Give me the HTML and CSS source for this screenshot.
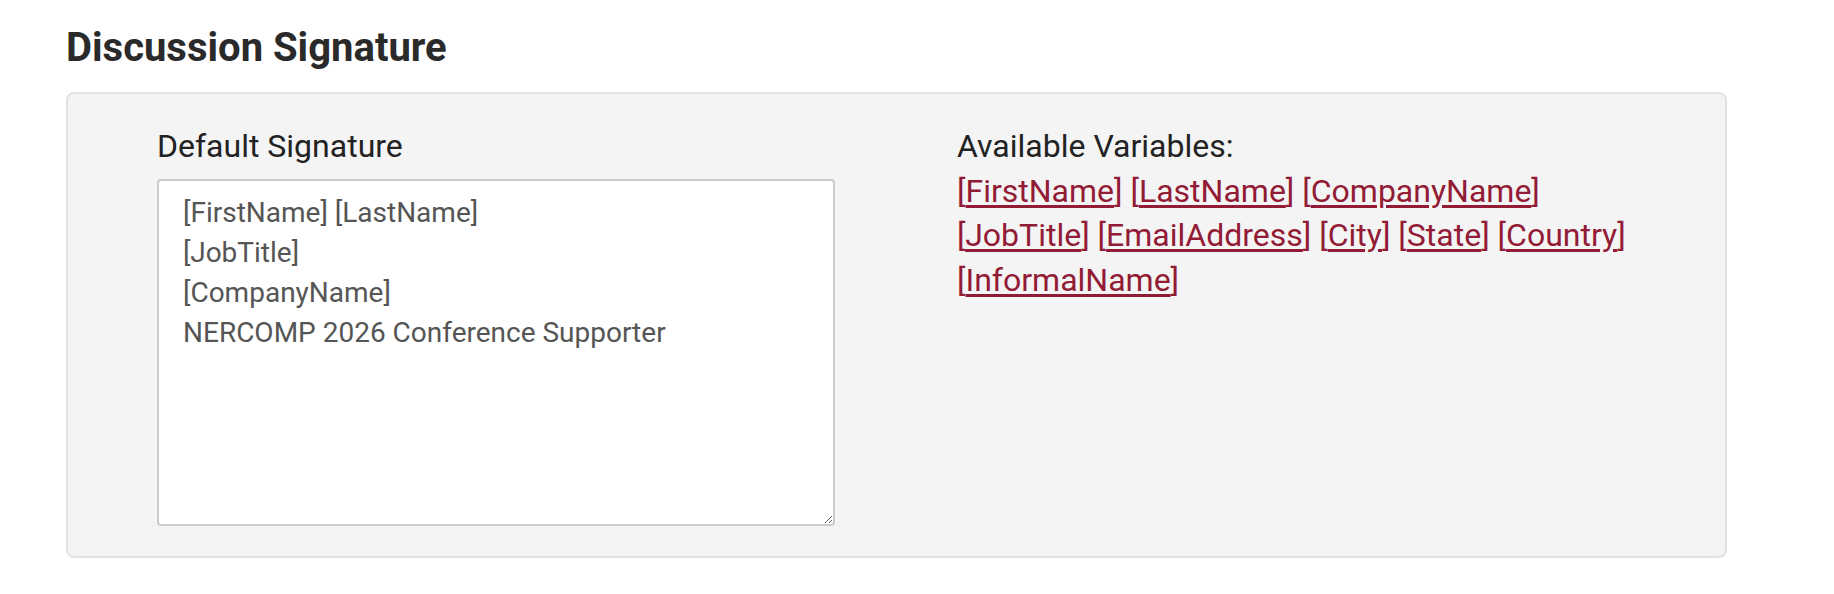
FILE: index.html
```html
<!DOCTYPE html>
<html lang="en">
<head>
    <meta charset="UTF-8">
    <meta name="viewport" content="width=device-width, initial-scale=1.0">
    <title>Discussion Signature</title>
    <link rel="stylesheet" href="styles.css">
</head>
<body>
  <div class="page">
    <h2 class="section-title">Discussion Signature</h2>

    <div class="well">
      <div class="signature-col">
        <label for="signature">Default Signature</label>
        <textarea id="signature" class="form-control">[FirstName] [LastName]
[JobTitle]
[CompanyName]
NERCOMP 2026 Conference Supporter</textarea>
      </div>

      <div class="variables-col">
        <div class="variables-title">Available Variables:</div>
        
        <div class="variables">
          <span class="var">[<a href="#">FirstName</a>]</span>
          <span class="var">[<a href="#">LastName</a>]</span>
          <span class="var">[<a href="#">CompanyName</a>]</span>
          <span class="var">[<a href="#">JobTitle</a>]</span>
          <span class="var">[<a href="#">EmailAddress</a>]</span>
          <span class="var">[<a href="#">City</a>]</span>
          <span class="var">[<a href="#">State</a>]</span>
          <span class="var">[<a href="#">Country</a>]</span>
          <span class="var">[<a href="#">InformalName</a>]</span>
        </div>
      </div>
    </div>
  </div>
</body>
</html>
```

FILE: styles.css
```css
  body {
    margin: 0;
    background: white;
    font-family: Roboto, "Liberation Sans", Arial, sans-serif;
    font-size: 28px;
    line-height: 1.42857;
    color: #222;
  }

  .page {
    padding: 0 107px 0 66px;
  }

  .section-title {
    margin: 26px 0 22px 0;
    font-size: 40px;
    line-height: 44px;
    font-weight: bold;
    color: #2a2a2a;
  }

  .well {
    display: grid;
    grid-template-columns: 678px 678px;
    column-gap: 122px;
    padding: 30px 0 30px 89px;
    background-color: #f4f4f4;
    border: 2px solid #e2e2e2;
    border-radius: 8px;
  }

  label {
    display: block;
    margin-bottom: 11px;
    font-size: 32px;
    line-height: 44px;
    font-weight: normal;
    color: #222;
  }

  .form-control {
    display: block;
    box-sizing: border-box;
    width: 678px;
    height: 347px;
    margin: 0;
    padding: 12px 24px;
    font-family: inherit;
    font-size: 28px;
    line-height: 40px;
    color: #555;
    background: white;
    border: 2px solid #cbcbcb;
    border-radius: 4px;
    resize: vertical;
  }

  .variables-col {
    font-size: 32px;
    line-height: 44.5px;
  }

  .variables-title {
    color: #222;
  }

  .variables {
    color: #921b35;
  }

  .var a {
    color: #921b35;
    text-decoration: underline;
    text-underline-offset: 3px;
  }
```
